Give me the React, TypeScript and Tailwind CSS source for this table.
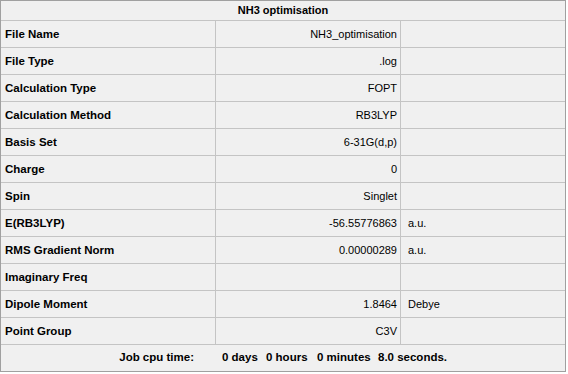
import React from 'react'

const rows: [string, string, string][] = [
    ['File Name', 'NH3_optimisation', ''],
    ['File Type', '.log', ''],
    ['Calculation Type', 'FOPT', ''],
    ['Calculation Method', 'RB3LYP', ''],
    ['Basis Set', '6-31G(d,p)', ''],
    ['Charge', '0', ''],
    ['Spin', 'Singlet', ''],
    ['E(RB3LYP)', '-56.55776863', 'a.u.'],
    ['RMS Gradient Norm', '0.00000289', 'a.u.'],
    ['Imaginary Freq', '', ''],
    ['Dipole Moment', '1.8464', 'Debye'],
    ['Point Group', 'C3V', ''],
]

const App = () => {
    return (
        <div className="w-[568px] h-[374px] bg-white" style={{ fontFamily: '"Liberation Sans", Arial, sans-serif' }}>
            <div className="w-[566px] h-[372px] border border-[#a0a0a0] bg-[#f0f0f0] text-[11px] text-black flex flex-col">
                <div className="h-[20px] border-b border-[#c4c4c4] flex items-center justify-center font-bold">
                    NH3 optimisation
                </div>
                {rows.map(([label, value, unit]) => (
                    <div key={label} className="h-[27px] border-b border-[#c4c4c4] grid grid-cols-[215px_185px_1fr]">
                        <div className="border-r border-[#c4c4c4] flex items-center pl-[4px] pt-[1px] font-bold text-[11.5px]">{label}</div>
                        <div className="border-r border-[#c4c4c4] flex items-center justify-end pr-[3px]">{value}</div>
                        <div className="flex items-center pl-[7px]">{unit}</div>
                    </div>
                ))}
                <div className="flex-1 flex items-center font-bold text-[11.5px] whitespace-nowrap">
                    <span className="w-[193px] text-right">Job cpu time:</span>
                    <span className="ml-[28px] w-[44px]">0 days</span>
                    <span className="w-[51px]">0 hours</span>
                    <span className="w-[61px]">0 minutes</span>
                    <span>8.0 seconds.</span>
                </div>
            </div>
        </div>
    )
}

export default App
